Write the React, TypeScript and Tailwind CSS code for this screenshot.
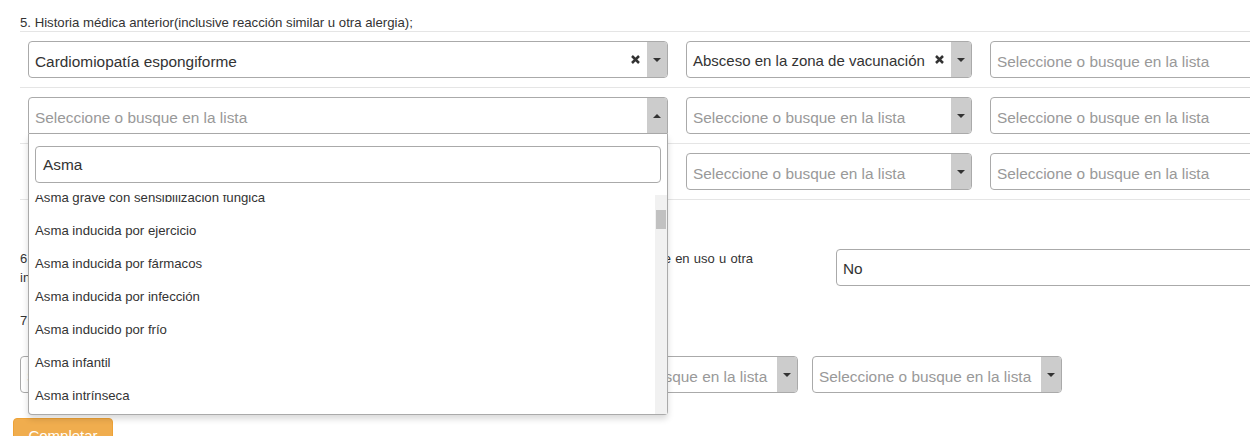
import clsx from "clsx";

const PLACEHOLDER = "Seleccione o busque en la lista";

function ClearIcon() {
  return (
    <svg width="9" height="9" viewBox="0 0 9 9" className="ml-[5px] mr-[7px] shrink-0">
      <path d="M1 1 L8 8 M8 1 L1 8" stroke="#333" strokeWidth="2.5" strokeLinecap="butt" />
    </svg>
  );
}

function Select({
  value,
  clear,
  open,
  tight,
  className,
}: {
  value?: string;
  clear?: boolean;
  open?: boolean;
  tight?: boolean;
  className?: string;
}) {
  return (
    <div
      className={clsx(
        "flex h-[37px] shrink-0 items-center overflow-hidden border border-[#aaa] bg-white",
        open ? "rounded-t-[4px]" : "rounded-[4px]",
        className
      )}
    >
      <span
        className={clsx(
          "min-w-0 flex-1 overflow-hidden whitespace-nowrap pl-[6px] pt-[4px]",
          tight ? "text-[15px]" : "text-[15.4px]",
          value ? "text-[#333]" : "text-[#999]"
        )}
      >
        {value ?? PLACEHOLDER}
      </span>
      {clear && <ClearIcon />}
      <span className="flex h-full w-[20px] shrink-0 items-center justify-center bg-[#ccc]">
        {open ? (
          <span className="h-0 w-0 border-x-[4px] border-b-[4px] border-x-transparent border-b-[#333]" />
        ) : (
          <span className="h-0 w-0 border-x-[4px] border-t-[4px] border-x-transparent border-t-[#333]" />
        )}
      </span>
    </div>
  );
}

const options = [
  "Asma grave con sensibilización fúngica",
  "Asma inducida por ejercicio",
  "Asma inducida por fármacos",
  "Asma inducida por infección",
  "Asma inducido por frío",
  "Asma infantil",
  "Asma intrínseca",
];

export default function App() {
  return (
    <div className="relative h-[436px] w-[1250px] overflow-hidden bg-white font-['Liberation_Sans',Arial,sans-serif] text-[#333]">
      <div className="pl-5">
        <div className="border-b border-[#e5e5e5] pt-[14px] text-[13.2px] leading-[17px]">
          5. Historia médica anterior(inclusive reacción similar u otra alergia);
        </div>

        <div className="flex gap-[18px] border-b border-[#e5e5e5] py-[9px] pl-2">
          <Select value="Cardiomiopatía espongiforme" clear className="w-[640px]" />
          <Select value="Absceso en la zona de vacunación" clear tight className="w-[286px]" />
          <Select className="w-[286px]" />
        </div>
        <div className="flex gap-[18px] border-b border-[#e5e5e5] py-[9px] pl-2">
          <Select open className="w-[640px]" />
          <Select className="w-[286px]" />
          <Select className="w-[286px]" />
        </div>
        <div className="flex gap-[18px] border-b border-[#e5e5e5] py-[9px] pl-2">
          <Select className="w-[640px]" />
          <Select className="w-[286px]" />
          <Select className="w-[286px]" />
        </div>

        <div className="mt-[49px] flex">
          <div className="w-[816px] shrink-0 text-[13px] leading-[19px]">
            <div className="w-[733px] whitespace-nowrap [text-align-last:justify]">
              6. Medicación concomitante (inclusive los medicamentos de venta libre, o productos herbales que se encuentre en uso u otra
            </div>
            <div>información relevante);</div>
          </div>
          <div className="flex h-[37px] w-[440px] shrink-0 items-center rounded-[4px] border border-[#aaa] pl-[6px] pt-[3px] text-[15.4px]">
            No
          </div>
        </div>

        <div className="mt-[24px] text-[13px] leading-[19px]">
          7. Vacunas recibidas en las últimas cuatro semanas;
        </div>

        <div className="mt-[26px] flex gap-[14px]">
          <Select className="w-[250px]" />
          <Select className="w-[250px]" />
          <Select className="w-[250px]" />
          <Select className="w-[250px]" />
        </div>

        <button className="-ml-[7px] mt-[25px] flex h-[34px] w-[100px] items-center justify-center rounded-[4px] border border-[#eea236] bg-[#f0ad4e] pt-[3px] text-[15px] text-white">
          Completar
        </button>
      </div>

      <div className="absolute left-[28px] top-[134px] flex h-[281px] w-[640px] flex-col rounded-b-[4px] border border-t-0 border-[#aaa] bg-white shadow-[0_4px_6px_rgba(0,0,0,0.15)]">
        <div className="mx-[6px] mt-[12px] flex h-[37px] shrink-0 items-center rounded-[4px] border border-[#aaa] pl-[7px] text-[15.4px] text-[#333]">
          Asma
        </div>
        <div className="relative mt-[12px] flex-1 overflow-hidden">
          <div className="-mt-[14px]">
            {options.map((o) => (
              <div key={o} className="flex h-[33px] items-center pl-[6px] text-[13.2px] text-[#333]">
                {o}
              </div>
            ))}
          </div>
          <div className="absolute bottom-0 right-0 top-0 w-[12px] bg-[#f1f1f1]">
            <div className="absolute left-[1px] right-[1px] top-[15px] h-[19px] bg-[#c1c1c1]" />
          </div>
        </div>
      </div>
    </div>
  );
}
